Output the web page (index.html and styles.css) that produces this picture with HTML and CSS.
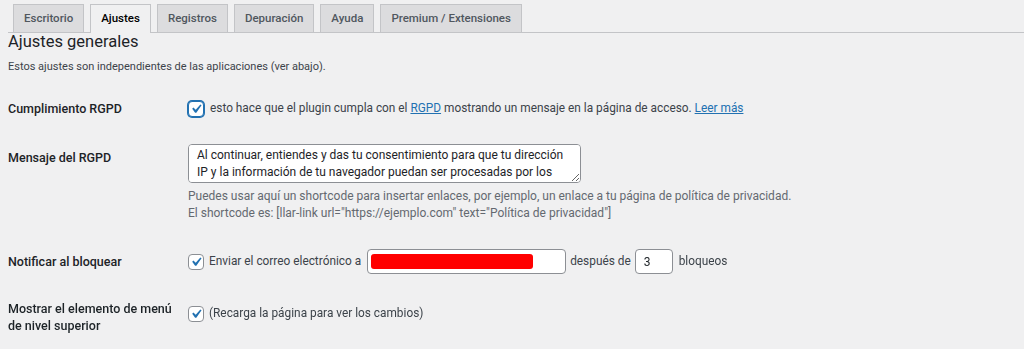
FILE: index.html
```html
<!DOCTYPE html>
<html lang="es">
<head>
    <meta charset="UTF-8">
    <meta name="viewport" content="width=device-width, initial-scale=1.0">
    <title>Ajustes</title>
    <link rel="stylesheet" href="styles.css">
</head>
<body>
    <div class="wrap">
        <!-- Tabs -->
        <nav class="nav-tabs">
            <a href="#" class="nav-tab">Escritorio</a>
            <a href="#" class="nav-tab active">Ajustes</a>
            <a href="#" class="nav-tab">Registros</a>
            <a href="#" class="nav-tab">Depuración</a>
            <a href="#" class="nav-tab">Ayuda</a>
            <a href="#" class="nav-tab">Premium / Extensiones</a>
        </nav>

        <h2 class="section-title">Ajustes generales</h2>
        <p class="section-intro">Estos ajustes son independientes de las aplicaciones (ver abajo).</p>

        <div class="form-table">
            <div class="row row-gdpr">
                <div class="label">Cumplimiento RGPD</div>
                <div class="field">
                    <label class="check-line">
                        <span class="checkbox focused">
                            <svg viewBox="0 0 20 20"><path d="M14.83 4.89l1.34.94-5.81 8.38H9.02L5.78 9.67l1.34-1.25 2.57 2.4z"/></svg>
                        </span>
                        <span>esto hace que el plugin cumpla con el <a href="#">RGPD</a> mostrando un mensaje en la página de acceso. <a href="#">Leer más</a></span>
                    </label>
                </div>
            </div>

            <div class="row row-message">
                <div class="label">Mensaje del RGPD</div>
                <div class="field">
                    <textarea class="message" rows="2">Al continuar, entiendes y das tu consentimiento para que tu dirección IP y la información de tu navegador puedan ser procesadas por los plugins de seguridad instalados en este sitio.</textarea>
                    <p class="description">Puedes usar aquí un shortcode para insertar enlaces, por ejemplo, un enlace a tu página de política de privacidad.<br>El shortcode es: [llar-link url="https://ejemplo.com" text="Política de privacidad"]</p>
                </div>
            </div>

            <div class="row row-notify">
                <div class="label">Notificar al bloquear</div>
                <div class="field inline">
                    <span class="checkbox">
                        <svg viewBox="0 0 20 20"><path d="M14.83 4.89l1.34.94-5.81 8.38H9.02L5.78 9.67l1.34-1.25 2.57 2.4z"/></svg>
                    </span>
                    <span>Enviar el correo electrónico a</span>
                    <span class="text-input email"><span class="redacted"></span></span>
                    <span>después de</span>
                    <input class="text-input count" type="text" value="3">
                    <span>bloqueos</span>
                </div>
            </div>

            <div class="row row-menu">
                <div class="label">Mostrar el elemento de menú de nivel superior</div>
                <div class="field inline">
                    <span class="checkbox">
                        <svg viewBox="0 0 20 20"><path d="M14.83 4.89l1.34.94-5.81 8.38H9.02L5.78 9.67l1.34-1.25 2.57 2.4z"/></svg>
                    </span>
                    <span>(Recarga la página para ver los cambios)</span>
                </div>
            </div>
        </div>
    </div>
</body>
</html>
```

FILE: styles.css
```css
/* General Styles */
body {
    margin: 0;
    background: #f0f0f1;
    color: #3c434a;
    font-family: Roboto, "Noto Sans", sans-serif;
    font-size: 11.85px;
    overflow: hidden;
}

a {
    color: #2271b1;
}

.wrap {
    padding: 4px 0 0 8px;
}

/* Tabs */
.nav-tabs {
    display: flex;
    gap: 6px;
    padding-left: 5px;
    border-bottom: 1px solid #c3c4c7;
    height: 28px;
}

.nav-tab {
    display: block;
    height: 28px;
    line-height: 27px;
    padding: 0 10px;
    box-sizing: border-box;
    background: #dcdcde;
    border: 1px solid #c3c4c7;
    border-bottom: none;
    color: #50575e;
    font-size: 11.5px;
    font-weight: 500;
    text-decoration: none;
}

.nav-tab.active {
    background: #f0f0f1;
    color: #000;
    height: 29px;
}

.section-title {
    margin: 0;
    font-size: 16.5px;
    font-weight: 400;
    line-height: 18px;
    color: #1d2327;
}

.section-intro {
    margin: 8px 0 0;
    font-size: 11px;
    line-height: 16px;
}

/* Form table */
.row {
    display: grid;
    grid-template-columns: 180px 1fr;
    align-items: start;
}

.label {
    color: #1d2327;
    font-size: 12.5px;
    font-weight: 500;
    line-height: 17px;
    padding-right: 8px;
}

.field {
    line-height: 17px;
}

.inline {
    display: flex;
    align-items: center;
    gap: 4px;
}

.inline > .checkbox {
    margin-right: 1px;
}

.row-gdpr {
    margin-top: 25px;
}

.check-line {
    display: flex;
    align-items: center;
    gap: 6px;
}

.checkbox {
    flex: none;
    width: 16px;
    height: 16px;
    box-sizing: border-box;
    border: 1px solid #8c8f94;
    border-radius: 4px;
    background: #fff;
    display: inline-flex;
    align-items: center;
    justify-content: center;
}

.checkbox svg {
    width: 20px;
    height: 20px;
    fill: #2271b1;
    margin: -2px;
}

.checkbox.focused {
    border-color: #2271b1;
    box-shadow: 0 0 0 1px #2271b1;
}

.row-message {
    margin-top: 27px;
}

.row-message .label {
    padding-top: 5px;
}

.message {
    display: block;
    width: 393px;
    height: 39px;
    box-sizing: border-box;
    margin: 0;
    padding: 2px 8px;
    border: 1px solid #8c8f94;
    border-radius: 4px;
    background: #fff;
    color: #1d2327;
    font-family: inherit;
    font-size: 12px;
    line-height: 17px;
    overflow-y: scroll;
    resize: vertical;
}

.message::-webkit-scrollbar {
    width: 11px;
}

.message::-webkit-scrollbar-track {
    background: #fff;
    border-left: 1px solid #e5e5e5;
}

.message::-webkit-scrollbar-thumb {
    background: #c1c1c1;
    border-radius: 4px;
    border: 2px solid #fff;
    min-height: 16px;
}

.description {
    margin: 5px 0 0;
    color: #646970;
    font-size: 12px;
    line-height: 17px;
}

.row-notify {
    margin-top: 27px;
}

.row-notify .label {
    padding-top: 4px;
}

.text-input {
    height: 25px;
    box-sizing: border-box;
    border: 1px solid #8c8f94;
    border-radius: 4px;
    background: #fff;
    font-family: inherit;
    font-size: 12px;
    color: #1d2327;
}

.email {
    display: inline-flex;
    align-items: center;
    width: 199px;
    padding-left: 3px;
    margin-left: 2px;
}

.redacted {
    display: block;
    width: 162px;
    height: 15px;
    background: #ff0000;
    border-radius: 3px;
}

.count {
    width: 38px;
    padding: 0 8px;
    margin: 0;
}

.count + span {
    margin-left: 2px;
}

.row-menu {
    margin-top: 26px;
}

.row-menu .field {
    padding-top: 5px;
}
```
